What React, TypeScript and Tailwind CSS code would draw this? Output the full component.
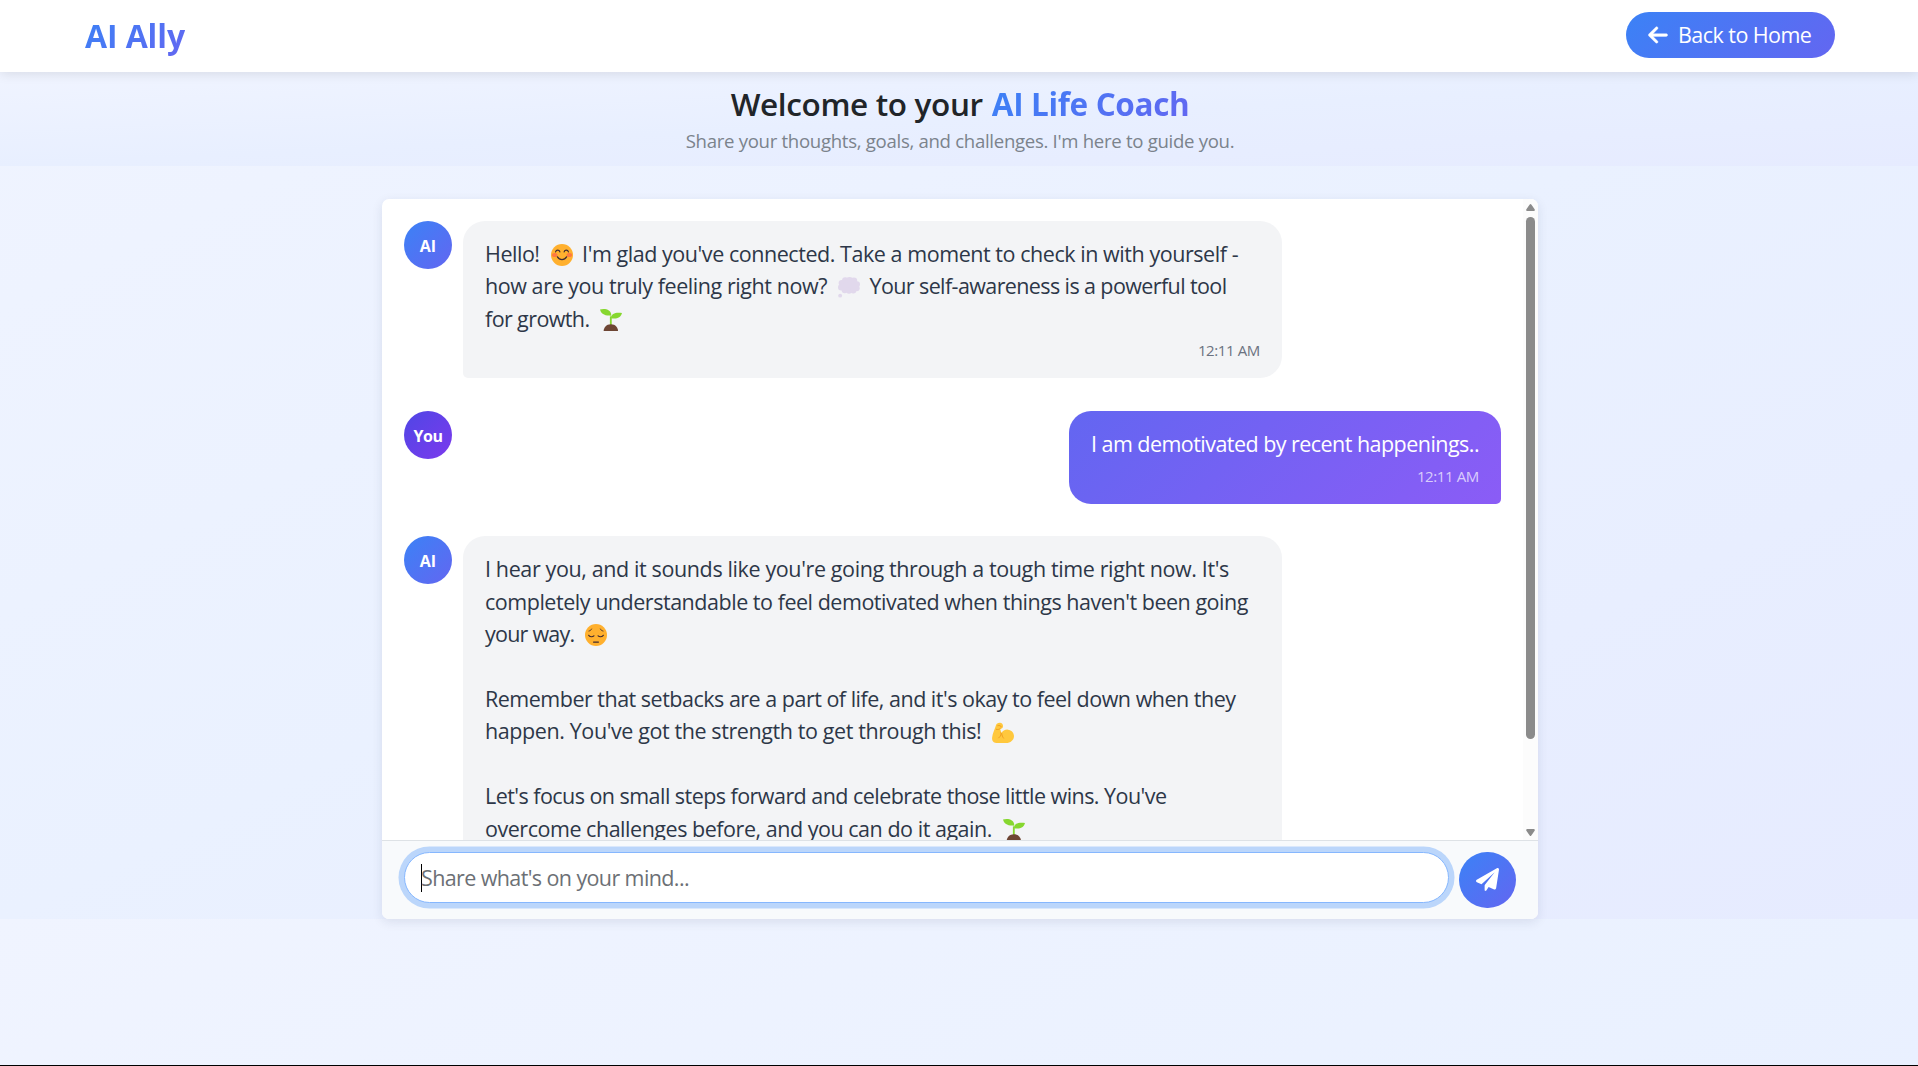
import type { ReactNode } from "react";

function ArrowLeft() {
  return (
    <svg viewBox="0 0 448 512" className="mr-[11px] h-[22px] w-5 shrink-0" fill="currentColor" stroke="currentColor" strokeWidth="8">
      <path d="M9.400 233.400c-12.500 12.500-12.500 32.800 0 45.300l160 160c12.500 12.500 32.800 12.500 45.300 0s12.500-32.800 0-45.300L109.200 288H416c17.700 0 32-14.300 32-32s-14.300-32-32-32H109.300l105.300-105.400c12.500-12.500 12.500-32.800 0-45.300s-32.800-12.500-45.300 0l-160 160z" />
    </svg>
  );
}

function PaperPlane() {
  return (
    <svg viewBox="0 0 512 512" className="h-[23px] w-[23px]" fill="currentColor">
      <path d="M511.600 36.860l-64 415.100c-1.500 9.734-7.375 18.220-15.970 23.050c-4.844 2.719-10.270 4.097-15.680 4.097c-4.188 0-8.319-.8154-12.290-2.472l-122.600-51.100l-50.860 76.290C226.300 508.500 219.800 512 212.800 512C201.300 512 192 502.700 192 491.200v-96.180c0-7.115 2.372-14.030 6.742-19.640L416 96l-293.700 264.300L19.690 317.500C8.438 312.800 .8125 302.200 .0625 289.100s5.469-23.720 16.060-29.770l448-255.100c10.690-6.109 23.880-5.547 34 1.406S513.500 24.720 511.600 36.860z" />
    </svg>
  );
}

function Smile() {
  return (
    <svg viewBox="0 0 36 36" className="h-[22px] w-[22px]">
      <circle cx="18" cy="18" r="18" fill="#ffb02e" />
      <ellipse cx="6" cy="18" rx="4.500" ry="3.300" fill="#ff6b45" opacity="0.8" />
      <ellipse cx="30" cy="18" rx="4.500" ry="3.300" fill="#ff6b45" opacity="0.8" />
      <g fill="none" stroke="#402a32" strokeWidth="2" strokeLinecap="round">
        <path d="M7.500 13c1-4 6-4 7 0M21.500 13c1-4 6-4 7 0" />
        <path d="M10.500 21c3.500 6 11.500 6 15 0" />
      </g>
    </svg>
  );
}

function Pensive() {
  return (
    <svg viewBox="0 0 36 36" className="h-[22px] w-[22px]">
      <circle cx="18" cy="18" r="18" fill="#ffb02e" />
      <g fill="none" stroke="#402a32" strokeWidth="2" strokeLinecap="round">
        <path d="M6 18.500c1.500 3 6.500 3 8.500.8M30 18.500c-1.500 3-6.500 3-8.500.8" />
        <path d="M6.500 11.500c2-.6 3.500-1.500 4.300-3.200M29.500 11.500c-2-.6-3.500-1.500-4.300-3.200" strokeWidth="1.500" />
        <path d="M14 29.500h8" />
      </g>
    </svg>
  );
}

function Thought() {
  return (
    <svg viewBox="0 0 36 36" className="h-[22px] w-[22px]">
      <g fill="#e1d8ec">
        <rect x="3" y="6" width="30" height="16" rx="8" />
        <circle cx="6" cy="10" r="5" />
        <circle cx="12" cy="6" r="5.500" />
        <circle cx="19" cy="5.500" r="5.500" />
        <circle cx="26" cy="6.500" r="5.500" />
        <circle cx="31" cy="12" r="5" />
        <circle cx="5" cy="17" r="5" />
        <circle cx="11" cy="21.500" r="5" />
        <circle cx="18" cy="22.500" r="5" />
        <circle cx="25" cy="22" r="5" />
        <circle cx="30.500" cy="18.500" r="5" />
        <circle cx="3.500" cy="30.500" r="3.200" />
      </g>
    </svg>
  );
}

function Seedling() {
  return (
    <svg viewBox="0 0 36 36" className="h-[22px] w-[22px]">
      <path d="M16.200 12h3v15h-3z" fill="#86d72f" />
      <path d="M0 1C6-1 18.500-.5 18.500 11c-9 0-16.500-1-18.500-10z" fill="#86d72f" />
      <path d="M36 6.500c-9-1.500-18 0-18 8.500 9 1.500 16-.5 18-8.500z" fill="#86d72f" />
      <path d="M6 36c0-5 4-11 11.800-11S29.500 31 29.500 36z" fill="#6d4534" />
    </svg>
  );
}

function Biceps() {
  return (
    <svg viewBox="0 0 36 36" className="h-[22px] w-[22px]">
      <path
        d="M6.500 5.500C7 2.500 10 1 13 1.200c3.500.2 5.500 3 5 6.300-.3 2.500-2.500 4-4.500 4.300L15.500 18c2-4 6.500-6 10.500-5.500 6 .6 10 5 10 10.500 0 7-6 11.500-13 11.500H9C3 34.500-.5 31 .2 25.500 1 18.500 4.500 12 6.500 5.500z"
        fill="#ffc83d"
      />
      <path
        d="M7 12c2.500.8 5 .3 6.500-1.500M9.500 6c2.500-.8 5 0 6 2M14.500 17.500c1 2.500.5 5-3.500 8.500M16 19c.3 3 1.200 5.500 3 7.500"
        fill="none"
        stroke="#ee9a20"
        strokeWidth="1.500"
        strokeLinecap="round"
      />
    </svg>
  );
}

function Line({ children }: { children?: ReactNode }) {
  return <div className="flex h-[32.45px] items-center whitespace-pre leading-[32.45px]">{children}</div>;
}

function Emoji({ children }: { children: ReactNode }) {
  return <span className="mt-[2px] ml-[11px] mr-[10.5px] block h-[22px] w-[22px] shrink-0">{children}</span>;
}

function Avatar({ user }: { user?: boolean }) {
  return (
    <div
      className={
        "flex h-12 w-12 shrink-0 items-center justify-center rounded-full pt-px text-[16px] font-bold text-white " +
        (user ? "bg-[linear-gradient(135deg,#4f46e5,#7c3aed)] tracking-[-0.45px]" : "bg-[linear-gradient(135deg,#3b82f6,#6366f1)] tracking-[0.2px]")
      }
    >
      {user ? "You" : "AI"}
    </div>
  );
}

function AiMessage({ children }: { children: ReactNode }) {
  return (
    <div className="mb-[32.8px] flex items-start gap-[11px]">
      <Avatar />
      <div className="w-[819px] rounded-[22px] rounded-bl-[5px] bg-[#f3f4f6] px-[22px] pt-[17px] pb-[17px] text-[#2d3748]">
        {children}
        <div className="mt-[4.9px] text-right text-[15px] leading-[21px] tracking-[-0.38px] text-[#6b7280]">12:11 AM</div>
      </div>
    </div>
  );
}

export default function App() {
  return (
    <div className="flex h-[1066px] flex-col overflow-hidden border-b border-black bg-[linear-gradient(to_bottom_right,#f0f4ff,#eaf1ff_50%,#e6ebff)] bg-[length:100%_919px] font-['Open_Sans',sans-serif]">
      <header className="z-10 flex h-[72px] shrink-0 items-start justify-between bg-white pl-[85px] pr-[83px] shadow-[0_2px_11px_rgba(0,0,0,0.1)]">
        <span className="mt-[14px] bg-[linear-gradient(135deg,#3b82f6,#6366f1)] bg-clip-text text-[32px] leading-[44px] font-bold tracking-[-0.11px] text-transparent">
          AI Ally
        </span>
        <button className="mt-3 flex h-[46px] w-[209px] items-center rounded-full bg-[linear-gradient(135deg,#3b82f6,#6366f1)] pl-[22px] text-[21.5px] tracking-[-0.55px] text-white">
          <ArrowLeft />
          <span className="-ml-px mt-px whitespace-nowrap">Back to Home</span>
        </button>
      </header>

      <section className="flex h-[94px] shrink-0 flex-col items-center bg-[linear-gradient(to_bottom_right,#f0f4ff,#e8efff_50%,#e6ebff)] pt-[10px] pl-[2px]">
        <h1 className="flex gap-[9px] text-[31.5px] leading-[44px] font-semibold whitespace-nowrap text-[#212529]">
          <span className="tracking-[-0.36px]">Welcome to your</span>
          <span className="bg-[linear-gradient(135deg,#3b82f6,#6366f1)] bg-clip-text font-bold tracking-[-0.36px] text-transparent">
            AI Life Coach
          </span>
        </h1>
        <p className="mt-px text-[18.6px] leading-[28px] tracking-[-0.3px] text-[#7b838c]">
          Share your thoughts, goals, and challenges. I'm here to guide you.
        </p>
      </section>

      <main className="mt-[33px] ml-[382px] flex h-[720px] w-[1156px] shrink-0 flex-col overflow-hidden rounded-[7px] bg-white shadow-[0_3px_11px_rgba(30,41,80,0.1)]">
        <div className="flex h-[641px] overflow-hidden">
          <div className="flex-1 pt-[22px] pr-[22px] pl-[22px] text-[21.5px]">
            <AiMessage>
              <Line>
                <span className="tracking-[-0.47px]">Hello!</span>
                <Emoji><Smile /></Emoji>
                <span className="-ml-px tracking-[-0.447px]">I'm glad you've connected. Take a moment to check in with yourself -</span>
              </Line>
              <Line>
                <span className="tracking-[-0.436px]">how are you truly feeling right now?</span>
                <Emoji><Thought /></Emoji>
                <span className="-ml-px tracking-[-0.604px]">Your self-awareness is a powerful tool</span>
              </Line>
              <Line>
                <span className="tracking-[-0.604px]">for growth.</span>
                <Emoji><Seedling /></Emoji>
              </Line>
            </AiMessage>

            <div className="mb-[32.5px] flex items-start justify-between">
              <Avatar user />
              <div className="w-[432px] rounded-[22px] rounded-br-[5px] bg-[linear-gradient(135deg,#6366f1,#8b5cf6)] px-[22px] pt-[17px] pb-[17px] text-white">
                <Line>
                  <span className="tracking-[-0.54px]">I am demotivated by recent happenings..</span>
                </Line>
                <div className="mt-[5.2px] text-right text-[15px] leading-[21px] tracking-[-0.38px] text-white/70">12:11 AM</div>
              </div>
            </div>

            <AiMessage>
              <Line><span className="tracking-[-0.378px]">I hear you, and it sounds like you're going through a tough time right now. It's</span></Line>
              <Line><span className="tracking-[-0.47px]">completely understandable to feel demotivated when things haven't been going</span></Line>
              <Line>
                <span className="tracking-[-0.76px]">your way.</span>
                <Emoji><Pensive /></Emoji>
              </Line>
              <Line />
              <Line><span className="tracking-[-0.5px]">Remember that setbacks are a part of life, and it's okay to feel down when they</span></Line>
              <Line>
                <span className="tracking-[-0.4px]">happen. You've got the strength to get through this!</span>
                <Emoji><Biceps /></Emoji>
              </Line>
              <Line />
              <Line><span className="tracking-[-0.543px]">Let's focus on small steps forward and celebrate those little wins. You've</span></Line>
              <Line>
                <span className="tracking-[-0.47px]">overcome challenges before, and you can do it again.</span>
                <Emoji><Seedling /></Emoji>
              </Line>
            </AiMessage>
          </div>
          <div className="flex w-[15px] flex-col items-center bg-[#fcfcfc] pt-[5px] pb-1">
            <svg viewBox="0 0 9 7" className="h-[7px] w-[9px] shrink-0" fill="#8b8b8b">
              <path d="M4.500 0Q5 0 5.300.5L8.800 5.500Q9 7 8 7H1Q0 7 .2 5.500L3.700.5Q4 0 4.500 0z" />
            </svg>
            <div className="mt-[6px] h-[522px] w-[9px] shrink-0 rounded-full bg-[#8b8b8b]" />
            <svg viewBox="0 0 9 7" className="mt-auto h-[7px] w-[9px] shrink-0" fill="#8b8b8b">
              <path d="M4.500 7Q5 7 5.300 6.500L8.800 1.500Q9 0 8 0H1Q0 0 .2 1.500L3.700 6.500Q4 7 4.500 7z" />
            </svg>
          </div>
        </div>

        <div className="flex flex-1 items-start border-t border-[#dee2e6] bg-[#f8fafc] pt-[11px] pl-[22px]">
          <div className="flex h-[51px] w-[1045px] items-center rounded-full border border-[#86b7fe] bg-white pl-4 shadow-[0_0_0_5.5px_#bbd6fb]">
            <span className="h-7 w-px shrink-0 bg-black" />
            <span className="-ml-px text-[21.5px] leading-[30px] tracking-[-0.606px] whitespace-nowrap text-[#6c7075]">Share what's on your mind...</span>
          </div>
          <button className="ml-[10px] flex h-[56px] w-[57px] items-center justify-center rounded-full bg-[linear-gradient(135deg,#3b82f6,#6366f1)] pb-[2px] text-white">
            <PaperPlane />
          </button>
        </div>
      </main>
    </div>
  );
}
